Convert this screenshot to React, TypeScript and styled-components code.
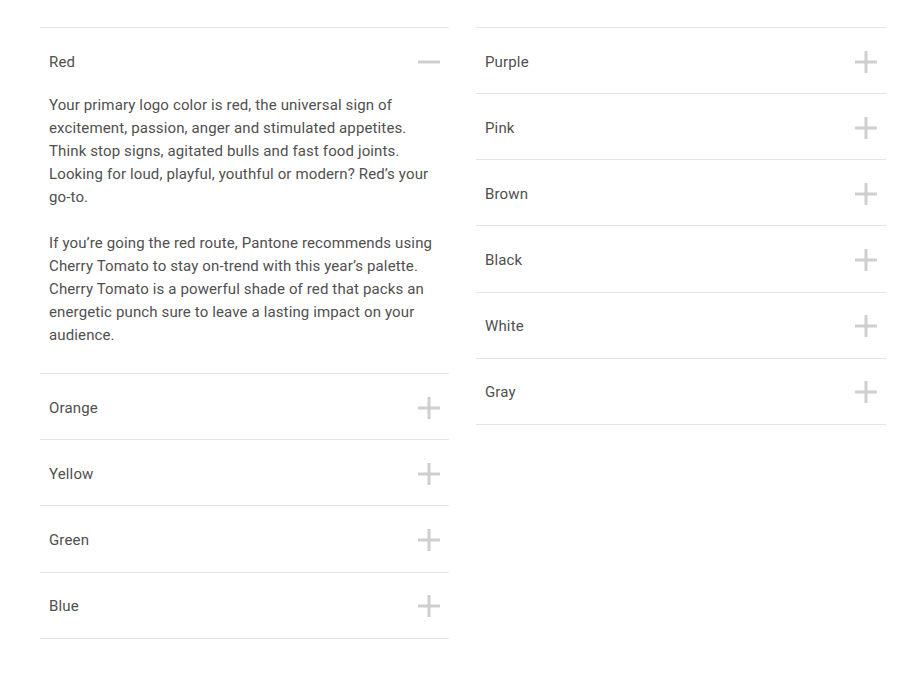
import React, { useState } from "react";
import styled, { createGlobalStyle } from "styled-components";

const Global = createGlobalStyle`
  html, body { margin: 0; padding: 0; background: #fff; }
  body { font-family: Roboto, "Noto Sans", sans-serif; color: #505050; }
`;

const Page = styled.div`
  display: grid;
  grid-template-columns: 409px 410px;
  column-gap: 27px;
  align-items: start;
  padding: 27px 0 0 40px;
`;

const Column = styled.div`
  display: flex;
  flex-direction: column;
  border-bottom: 1px solid #e4e4e4;
`;

const Item = styled.div`
  border-top: 1px solid #e4e4e4;
`;

const Header = styled.button`
  display: flex;
  align-items: center;
  justify-content: space-between;
  width: 100%;
  height: 65.17px;
  padding: 2px 9px 0;
  margin: 0;
  border: 0;
  background: transparent;
  font: inherit;
  font-size: 15px;
  color: #505050;
  cursor: pointer;
  text-align: left;
  letter-spacing: 0.15px;
`;

const Body = styled.div`
  padding: 1px 9px 26px;
  font-size: 15px;
  line-height: 23px;
  color: #505050;
  letter-spacing: 0.13px;
  p { margin: 0; }
  p + p { margin-top: 23px; }
`;

const Toggle = ({ open }: { open: boolean }) => (
  <svg width="22" height="22" viewBox="0 0 22 22" aria-hidden>
    <rect x="0" y="9.5" width="22" height="3" fill="#cfcfcf" />
    {!open && <rect x="9.5" y="0" width="3" height="22" fill="#cfcfcf" />}
  </svg>
);

type Entry = { name: string; body?: string[] };

const left: Entry[] = [
  {
    name: "Red",
    body: [
      "Your primary logo color is red, the universal sign of excitement, passion, anger and stimulated appetites. Think stop signs, agitated bulls and fast food joints. Looking for loud, playful, youthful or modern? Red\u2019s your go-to.",
      "If you\u2019re going the red route, Pantone recommends using Cherry Tomato to stay on-trend with this year\u2019s palette. Cherry Tomato is a powerful shade of red that packs an energetic punch sure to leave a lasting impact on your audience.",
    ],
  },
  { name: "Orange" },
  { name: "Yellow" },
  { name: "Green" },
  { name: "Blue" },
];

const right: Entry[] = [
  { name: "Purple" },
  { name: "Pink" },
  { name: "Brown" },
  { name: "Black" },
  { name: "White" },
  { name: "Gray" },
];

const Accordion = ({ items, initial }: { items: Entry[]; initial: string | null }) => {
  const [open, setOpen] = useState<string | null>(initial);
  return (
    <Column>
      {items.map((it) => {
        const isOpen = open === it.name;
        return (
          <Item key={it.name}>
            <Header onClick={() => setOpen(isOpen ? null : it.name)}>
              <span>{it.name}</span>
              <Toggle open={isOpen} />
            </Header>
            {isOpen && it.body && (
              <Body>
                {it.body.map((p, i) => (
                  <p key={i}>{p}</p>
                ))}
              </Body>
            )}
          </Item>
        );
      })}
    </Column>
  );
};

export default function App() {
  return (
    <>
      <Global />
      <Page>
        <Accordion items={left} initial="Red" />
        <Accordion items={right} initial={null} />
      </Page>
    </>
  );
}
